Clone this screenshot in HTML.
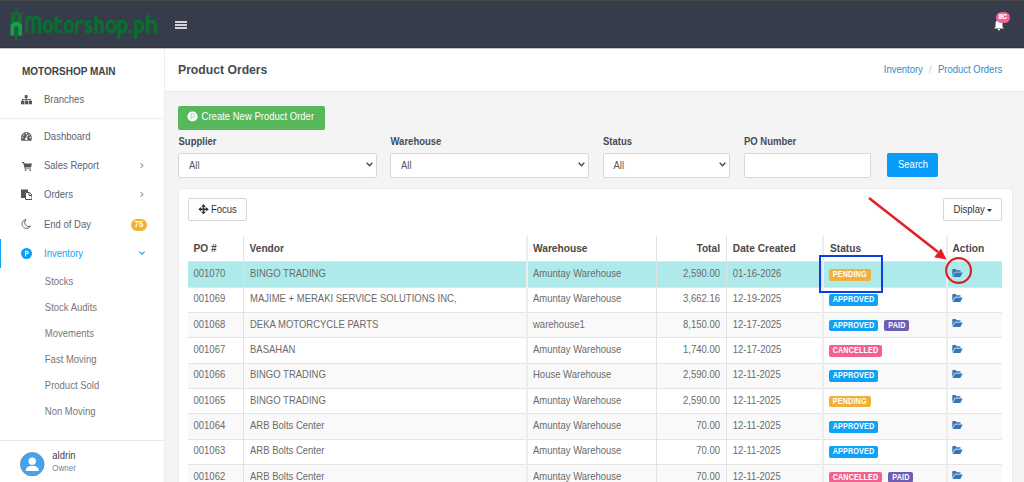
<!DOCTYPE html>
<html><head><meta charset="utf-8">
<style>
html,body{margin:0;padding:0;width:1024px;height:482px;overflow:hidden;background:#f4f4f4;font-family:"Liberation Sans",sans-serif;}
.a{position:absolute;}
.t{position:absolute;white-space:nowrap;line-height:12px;font-size:9.5px;transform:scaleY(1.18);transform-origin:0 9.3px;}
.nt{transform:none;}
#hdr{left:0;top:0;width:1024px;height:48px;background:#363c4a;}
#hdrtop{left:0;top:0;width:1024px;height:1px;background:#474747;}
#hdrbot{left:0;top:47px;width:1024px;height:1px;background:#30363f;}
#side{left:0;top:48px;width:164px;height:434px;background:#fff;}
#sideb{left:164px;top:48px;width:1px;height:434px;background:#eeeeee;}
.si{color:#5a6373;}
.sub{color:#777;}
.ic{position:absolute;fill:#555;}
#chdr{left:165px;top:48px;width:859px;height:43px;background:#fff;border-bottom:1px solid #e8e8e8;}
.lbl{font-weight:bold;color:#444c58;}
.sel{position:absolute;top:153.2px;height:22.8px;background:#fff;border:1px solid #d9d9d9;border-radius:2px;}
.sel span{position:absolute;left:10px;top:5.8px;line-height:12px;font-size:9.5px;color:#555;transform:scaleY(1.18);transform-origin:0 9.3px;}
.sel svg{position:absolute;right:3px;top:8px;}
#box{left:177.8px;top:188.2px;width:835px;height:300px;box-sizing:border-box;background:#fff;border-radius:3px;border:1px solid #ebebeb;}
.btn{position:absolute;background:#fff;border:1px solid #d6d6d6;border-radius:2px;box-sizing:border-box;}
.th{font-weight:bold;font-size:10.2px;color:#4a4a4a;transform:none;}
.row{position:absolute;left:188px;width:814px;height:25.33px;box-sizing:border-box;border-top:1px solid #e4e4e4;}
.vl{position:absolute;width:1px;background:#e2e2e2;top:235.6px;height:250px;}
.td{color:#6b6b6b;}
.bd{position:absolute;height:11.6px;border-radius:2px;color:#fff;font-weight:bold;font-size:7.2px;line-height:11.6px;text-align:center;}
.bd span{display:inline-block;transform:scaleY(1.15);letter-spacing:0.15px;}
.ap{background:#0da2f6;}
.pe{background:#efb03c;}
.ca{background:#f2618f;}
.pa{background:#6f5db4;}
</style></head>
<body>
<div class="a" id="hdr"></div>
<div class="a" id="hdrtop"></div>
<div class="a" id="hdrbot"></div>
<div class="a" style="left:0;top:48px;width:1024px;height:1px;background:rgba(40,46,58,0.28);z-index:5"></div>
<!-- logo -->
<svg class="a" style="left:0;top:0" width="170" height="48" viewBox="0 0 170 48">
  <circle cx="16.2" cy="10.9" r="1.5" fill="none" stroke="#0c7234" stroke-width="1.1"/>
  <path d="M8.3 13.4 Q12 12.6 15 12.4 L17.4 12.4 Q20.4 12.6 24.1 13.4 Q20.4 14.3 17.4 14.5 L15 14.5 Q12 14.3 8.3 13.4 Z" fill="#0c7234"/>
  <path d="M10.9 23 L10.9 17 Q10.9 14.6 13.2 14.5 L15.4 14.5 L15.4 23 Z" fill="#0c7234"/>
  <path d="M21.9 23 L21.9 17 Q21.9 14.6 19.6 14.5 L17.1 14.5 L17.1 23 Z" fill="#0c7234"/>
  <path d="M10.5 34.5 L10.5 25.2 Q10.5 24.3 11.3 23.8 L15.4 21.7 Q16.2 21.3 17 21.7 L21.2 23.8 Q22 24.3 22 25.2 L22 34.5 Q22 35.8 20.7 35.8 L18.3 35.8 L18.3 27.4 L16.2 26.1 L14.2 27.4 L14.2 35.8 L11.8 35.8 Q10.5 35.8 10.5 34.5 Z" fill="#13a249"/>
  <rect x="15" y="26.6" width="2.5" height="13.4" rx="1.1" fill="#0c7234"/>
  <g fill="none" stroke="#0a6d31" stroke-width="3.35">
    <path d="M26.65 33.2 V21.5 A3.225 4.15 0 0 1 33.1 21.5 V33.2 M33.1 21.5 A3.225 4.15 0 0 1 39.55 21.5 V33.2"/>
    <ellipse cx="47.8" cy="26.55" rx="3.75" ry="5.1"/>
    <path d="M56.05 16.2 V29 Q56.05 31.65 58.8 31.65 H61.8 M54.5 21.45 H61.5"/>
    <ellipse cx="68.85" cy="26.55" rx="3.75" ry="5.1"/>
    <path d="M76.55 33.2 V26 Q76.55 21.45 80.8 21.45 H83"/>
    <path d="M90.9 22.6 Q89.6 21.45 87.9 21.45 Q85.85 21.45 85.85 23.6 Q85.85 25.4 88.3 26.4 Q90.75 27.4 90.75 29.6 Q90.75 31.75 88.3 31.75 Q86.3 31.75 85 30.6"/>
    <path d="M95.9 15 V33.2 M95.9 25.2 Q95.9 21.45 99.05 21.45 Q102.2 21.45 102.2 25.2 V33.2"/>
    <ellipse cx="111.3" cy="26.55" rx="4.15" ry="5.1"/>
    <path d="M118.8 19.9 V38.6"/>
    <ellipse cx="122.5" cy="26.55" rx="3.65" ry="5.1"/>
    <path d="M135.7 19.9 V38.6"/>
    <ellipse cx="139.1" cy="26.55" rx="3.45" ry="5.1"/>
    <path d="M147.6 15 V33.2 M147.6 25.2 Q147.6 21.45 151.5 21.45 Q155.4 21.45 155.4 25.2 V33.2"/>
  </g>
  <circle cx="130.4" cy="31.4" r="1.8" fill="#0a6d31"/>
</svg>
<!-- hamburger -->
<div class="a" style="left:175.4px;top:21px;width:11.6px;height:2px;background:#d3d4d9"></div>
<div class="a" style="left:175.4px;top:24px;width:11.6px;height:2px;background:#d3d4d9"></div>
<div class="a" style="left:175.4px;top:27px;width:11.6px;height:2px;background:#d3d4d9"></div>
<!-- bell -->
<svg class="a" style="left:993px;top:19px" width="12" height="12" viewBox="0 0 12 12">
  <path d="M6 1 Q2.5 1 2.5 5 L2.5 8 L1 9.5 L11 9.5 L9.5 8 L9.5 5 Q9.5 1 6 1 Z" fill="#fff"/>
  <rect x="5" y="10" width="2" height="1.3" fill="#fff"/>
</svg>
<div class="a" style="left:995.7px;top:12.2px;width:14px;height:11px;border-radius:6px;background:#ef6494;color:#fff;font-size:6.3px;font-weight:bold;line-height:10px;text-align:center;-webkit-text-stroke:0.2px #fff">8C</div>

<!-- sidebar -->
<div class="a" id="side"></div>
<div class="a" id="sideb"></div>
<div class="t nt" style="left:22px;top:65.8px;font-size:10px;font-weight:bold;color:#3d434c">MOTORSHOP MAIN</div>
<svg class="ic" style="left:20px;top:94px" width="13" height="12" viewBox="0 0 13 12"><rect x="4.7" y="1.1" width="2.9" height="2.9"/><rect x="5.65" y="3.8" width="1" height="1.4"/><rect x="2.2" y="5" width="8.4" height="0.9"/><rect x="2.2" y="5" width="0.9" height="1.9"/><rect x="5.65" y="5" width="0.9" height="1.9"/><rect x="9.7" y="5" width="0.9" height="1.9"/><rect x="1" y="6.8" width="3.3" height="3.5"/><rect x="4.85" y="6.8" width="3.3" height="3.5"/><rect x="8.7" y="6.8" width="3.3" height="3.5"/></svg>
<div class="t si" style="left:44px;top:94px">Branches</div>
<div class="a" style="left:0;top:117.5px;width:164px;height:1px;background:#eeeeee"></div>

<svg class="a" style="left:21.2px;top:132px" width="11" height="9" viewBox="0 0 11 9"><path d="M0.4 8.8 Q0 7.4 0 5.5 A5.4 5.4 0 0 1 10.8 5.5 Q10.8 7.4 10.4 8.8 Z" fill="#5b5f65"/><g fill="#fff"><circle cx="5.3" cy="1.6" r="0.8"/><circle cx="1.6" cy="5.5" r="0.8"/><circle cx="9.2" cy="5.5" r="0.8"/><circle cx="2.7" cy="2.9" r="0.55"/><circle cx="8" cy="2.9" r="0.55"/><circle cx="5.3" cy="6.9" r="1.2"/></g><path d="M5.3 6.6 L6.7 2.6" stroke="#fff" stroke-width="0.9"/></svg>
<div class="t si" style="left:44px;top:130.6px">Dashboard</div>

<svg class="ic" style="left:21.7px;top:162px" width="10" height="9" viewBox="0 0 10 9"><path d="M0 0 L2 0 L2.6 1.5 L10 1.5 L9 5.5 L3.2 5.5 L3.5 6.5 L9 6.5 L9 7.3 L2.8 7.3 L1.3 1 L0 1 Z"/><circle cx="3.5" cy="8.2" r="0.8"/><circle cx="8.2" cy="8.2" r="0.8"/></svg>
<div class="t si" style="left:44px;top:160.4px">Sales Report</div>
<svg class="a" style="left:139.5px;top:162.7px" width="4" height="5" viewBox="0 0 4 5"><path d="M0.5 0.3 L3.2 2.5 L0.5 4.7" stroke="#6e7580" stroke-width="1" fill="none"/></svg>

<svg class="ic" style="left:21px;top:189.3px" width="11" height="11" viewBox="0 0 11 11"><path d="M0 0.5 L7 0.5 L7 3 L4 3 L4 9 L0 9 Z"/><path d="M4.5 3.5 L8.5 3.5 L11 6 L11 10.5 L4.5 10.5 Z" fill="none" stroke="#555" stroke-width="1"/><path d="M8 3.5 L8 6.5 L11 6.5" fill="none" stroke="#555" stroke-width="1"/></svg>
<div class="t si" style="left:44px;top:189.4px">Orders</div>
<svg class="a" style="left:139.5px;top:192.3px" width="4" height="5" viewBox="0 0 4 5"><path d="M0.5 0.3 L3.2 2.5 L0.5 4.7" stroke="#6e7580" stroke-width="1" fill="none"/></svg>

<svg class="ic" style="left:21px;top:218.8px" width="10" height="10" viewBox="0 0 10 10"><path d="M5 0.5 A4.5 4.5 0 1 0 9.6 7 A4 4 0 0 1 5 0.5 Z" fill="none" stroke="#666" stroke-width="1"/></svg>
<div class="t si" style="left:44px;top:219.1px">End of Day</div>
<div class="a" style="left:130.5px;top:219px;width:16.8px;height:11.9px;border-radius:6px;background:#f0b033;color:#fff;font-size:8px;font-weight:bold;line-height:11.9px;text-align:center"><span style="display:inline-block;transform:scaleY(1.1)">75</span></div>

<div class="a" style="left:0;top:238.8px;width:1.3px;height:29px;background:#0ea5f2"></div>
<svg class="a" style="left:21px;top:247.6px" width="11" height="11" viewBox="0 0 11 11"><circle cx="5.5" cy="5.5" r="5.5" fill="#0a9ff3"/><path d="M4 2.8 L6.2 2.8 Q7.8 2.8 7.8 4.5 Q7.8 6.2 6.2 6.2 L5.1 6.2 L5.1 8.3 L4 8.3 Z M5.1 3.8 L5.1 5.2 L6.1 5.2 Q6.7 5.2 6.7 4.5 Q6.7 3.8 6.1 3.8 Z" fill="#fff"/></svg>
<div class="t" style="left:44px;top:247.9px;color:#0ea5f2">Inventory</div>
<svg class="a" style="left:138.7px;top:250.5px" width="6" height="4" viewBox="0 0 6 4"><path d="M0.4 0.6 L3 3.2 L5.6 0.6" stroke="#0ea5f2" stroke-width="1.1" fill="none"/></svg>

<div class="t sub" style="left:44.8px;top:275.6px">Stocks</div>
<div class="t sub" style="left:44.8px;top:301.6px">Stock Audits</div>
<div class="t sub" style="left:44.8px;top:327.7px">Movements</div>
<div class="t sub" style="left:44.8px;top:353.7px">Fast Moving</div>
<div class="t sub" style="left:44.8px;top:379.8px">Product Sold</div>
<div class="t sub" style="left:44.8px;top:405.8px">Non Moving</div>

<div class="a" style="left:0;top:440px;width:164px;height:1px;background:#e8e8e8"></div>
<svg class="a" style="left:20.1px;top:451.7px" width="24.5" height="24.5" viewBox="0 0 24 24"><circle cx="12" cy="12" r="11.6" fill="#44a3ee" stroke="#6b7b88" stroke-width="0.6"/><circle cx="12" cy="9" r="3.6" fill="#fff"/><path d="M5.5 18.5 Q6 13.5 12 13.5 Q18 13.5 18.5 18.5 Z" fill="#fff"/></svg>
<div class="t" style="left:52.3px;top:449.7px;color:#444">aldrin</div>
<div class="t" style="left:52.3px;top:462.8px;font-size:8px;color:#7d838c;transform:scaleY(1.1);transform-origin:0 8.8px">Owner</div>

<!-- content header -->
<div class="a" id="chdr"></div>
<div class="t" style="left:178px;top:63.9px;font-size:12.2px;font-weight:bold;color:#454a52;transform:scaleY(1.06);transform-origin:0 10.16px">Product Orders</div>
<div class="t" style="right:21.7px;top:63.9px;color:#3a86c4"><span>Inventory</span><span style="color:#ccc;padding:0 6.2px">/</span><span>Product Orders</span></div>

<!-- create button -->
<div class="a" style="left:178px;top:106.3px;width:146.5px;height:23.6px;background:#56b85a;border-radius:2px"></div>
<svg class="a" style="left:187.4px;top:111.2px" width="11" height="11" viewBox="0 0 11 11"><circle cx="5.5" cy="5.5" r="5.1" fill="#fff"/><path d="M4.1 8.4 L4.1 3 L6.2 3 Q7.6 3 7.6 4.6 Q7.6 6.2 6.2 6.2 L4.3 6.2" fill="none" stroke="#8fd48f" stroke-width="0.9"/></svg>
<div class="t" style="left:201.6px;top:111px;color:#fff">Create New Product Order</div>

<!-- filters -->
<div class="t lbl" style="left:178.5px;top:135.9px">Supplier</div>
<div class="t lbl" style="left:390.5px;top:135.9px">Warehouse</div>
<div class="t lbl" style="left:603px;top:135.9px">Status</div>
<div class="t lbl" style="left:744px;top:135.9px">PO Number</div>

<div class="sel" style="left:178px;width:196.5px"><span>All</span><svg width="7" height="5" viewBox="0 0 7 5"><path d="M0.7 0.8 L3.5 3.8 L6.3 0.8" stroke="#444" stroke-width="1.3" fill="none"/></svg></div>
<div class="sel" style="left:390px;width:196.5px"><span>All</span><svg width="7" height="5" viewBox="0 0 7 5"><path d="M0.7 0.8 L3.5 3.8 L6.3 0.8" stroke="#444" stroke-width="1.3" fill="none"/></svg></div>
<div class="sel" style="left:602.5px;width:125.5px"><span>All</span><svg width="7" height="5" viewBox="0 0 7 5"><path d="M0.7 0.8 L3.5 3.8 L6.3 0.8" stroke="#444" stroke-width="1.3" fill="none"/></svg></div>
<div class="sel" style="left:744px;width:125px"></div>
<div class="a" style="left:887.2px;top:153.2px;width:50.8px;height:23.8px;background:#069cf7;border-radius:2px"></div>
<div class="t" style="left:898px;top:158.6px;color:#fff">Search</div>

<!-- box -->
<div class="a" id="box"></div>
<div class="btn" style="left:188.4px;top:198.3px;width:58.2px;height:23.2px"></div>
<svg class="a" style="left:197.9px;top:203.6px" width="11" height="10.5" viewBox="0 0 11 11"><g fill="#333"><rect x="4.7" y="2" width="1.6" height="7"/><rect x="2" y="4.7" width="7" height="1.6"/><path d="M5.5 0 L3.1 3 L7.9 3 Z M5.5 11 L3.1 8 L7.9 8 Z M0 5.5 L3 3.1 L3 7.9 Z M11 5.5 L8 3.1 L8 7.9 Z"/></g></svg>
<div class="t" style="left:211px;top:204.3px;color:#333">Focus</div>
<div class="btn" style="left:943px;top:198.4px;width:58.8px;height:23.1px"></div>
<div class="t" style="left:953.6px;top:204.2px;color:#333">Display</div>
<svg class="a" style="left:987px;top:208.5px" width="5" height="3" viewBox="0 0 5 3"><path d="M0 0 L5 0 L2.5 3 Z" fill="#333"/></svg>

<!-- table header -->
<div class="t th" style="left:193.5px;top:243px">PO #</div>
<div class="t th" style="left:249.5px;top:243px">Vendor</div>
<div class="t th" style="left:533px;top:243px">Warehouse</div>
<div class="t th" style="right:304px;top:243px">Total</div>
<div class="t th" style="left:732.8px;top:243px">Date Created</div>
<div class="t th" style="left:830px;top:243px">Status</div>
<div class="t th" style="left:952.5px;top:243px">Action</div>

<div id="rows"></div>
<div class="row" style="top:261.33px;background:#aeeaea"></div>
<div class="row" style="top:286.66px;background:#fff"></div>
<div class="row" style="top:311.99px;background:#f9f9f9"></div>
<div class="row" style="top:337.32px;background:#fff"></div>
<div class="row" style="top:362.65px;background:#f9f9f9"></div>
<div class="row" style="top:387.98px;background:#fff"></div>
<div class="row" style="top:413.31px;background:#f9f9f9"></div>
<div class="row" style="top:438.64px;background:#fff"></div>
<div class="row" style="top:463.97px;background:#f9f9f9"></div>
<div class="vl" style="left:243px;width:1px;background:#e2e2e2"></div>
<div class="vl" style="left:526px;width:2px;background:#ededed"></div>
<div class="vl" style="left:656px;width:1px;background:#e2e2e2"></div>
<div class="vl" style="left:726px;width:1px;background:#e2e2e2"></div>
<div class="vl" style="left:822px;width:2px;background:#ededed"></div>
<div class="vl" style="left:946px;width:2px;background:#ededed"></div>
<div class="t td" style="left:193.5px;top:268.03px">001070</div>
<div class="t td" style="left:250px;top:268.03px">BINGO TRADING</div>
<div class="t td" style="left:533px;top:268.03px">Amuntay Warehouse</div>
<div class="t td" style="right:304px;top:268.03px">2,590.00</div>
<div class="t td" style="left:732.8px;top:268.03px">01-16-2026</div>
<div class="bd pe" style="left:829px;top:268.93px;width:41.5px"><span>PENDING</span></div>
<svg class="a" style="left:952.4px;top:268.73px" width="11" height="8" viewBox="0 0 11 8"><path d="M0.3 0.7 Q0.3 0 1 0 L3.7 0 L4.6 1.2 L8 1.2 Q8.6 1.2 8.6 1.8 L8.6 2.8 L2.9 2.8 L0.3 7.2 Z" fill="#3576b9"/><path d="M3.2 3.4 L10.6 3.4 L8.4 7.9 L0.6 7.9 Z" fill="#3576b9"/></svg>
<div class="t td" style="left:193.5px;top:293.36px">001069</div>
<div class="t td" style="left:250px;top:293.36px">MAJIME + MERAKI SERVICE SOLUTIONS INC,</div>
<div class="t td" style="left:533px;top:293.36px">Amuntay Warehouse</div>
<div class="t td" style="right:304px;top:293.36px">3,662.16</div>
<div class="t td" style="left:732.8px;top:293.36px">12-19-2025</div>
<div class="bd ap" style="left:829px;top:294.26px;width:49px"><span>APPROVED</span></div>
<svg class="a" style="left:952.4px;top:294.06px" width="11" height="8" viewBox="0 0 11 8"><path d="M0.3 0.7 Q0.3 0 1 0 L3.7 0 L4.6 1.2 L8 1.2 Q8.6 1.2 8.6 1.8 L8.6 2.8 L2.9 2.8 L0.3 7.2 Z" fill="#3576b9"/><path d="M3.2 3.4 L10.6 3.4 L8.4 7.9 L0.6 7.9 Z" fill="#3576b9"/></svg>
<div class="t td" style="left:193.5px;top:318.69px">001068</div>
<div class="t td" style="left:250px;top:318.69px">DEKA MOTORCYCLE PARTS</div>
<div class="t td" style="left:533px;top:318.69px">warehouse1</div>
<div class="t td" style="right:304px;top:318.69px">8,150.00</div>
<div class="t td" style="left:732.8px;top:318.69px">12-17-2025</div>
<div class="bd ap" style="left:829px;top:319.59px;width:49px"><span>APPROVED</span></div>
<div class="bd pa" style="left:884.4px;top:319.59px;width:25px"><span>PAID</span></div>
<svg class="a" style="left:952.4px;top:319.39px" width="11" height="8" viewBox="0 0 11 8"><path d="M0.3 0.7 Q0.3 0 1 0 L3.7 0 L4.6 1.2 L8 1.2 Q8.6 1.2 8.6 1.8 L8.6 2.8 L2.9 2.8 L0.3 7.2 Z" fill="#3576b9"/><path d="M3.2 3.4 L10.6 3.4 L8.4 7.9 L0.6 7.9 Z" fill="#3576b9"/></svg>
<div class="t td" style="left:193.5px;top:344.02px">001067</div>
<div class="t td" style="left:250px;top:344.02px">BASAHAN</div>
<div class="t td" style="left:533px;top:344.02px">Amuntay Warehouse</div>
<div class="t td" style="right:304px;top:344.02px">1,740.00</div>
<div class="t td" style="left:732.8px;top:344.02px">12-17-2025</div>
<div class="bd ca" style="left:829px;top:344.92px;width:53px"><span>CANCELLED</span></div>
<svg class="a" style="left:952.4px;top:344.72px" width="11" height="8" viewBox="0 0 11 8"><path d="M0.3 0.7 Q0.3 0 1 0 L3.7 0 L4.6 1.2 L8 1.2 Q8.6 1.2 8.6 1.8 L8.6 2.8 L2.9 2.8 L0.3 7.2 Z" fill="#3576b9"/><path d="M3.2 3.4 L10.6 3.4 L8.4 7.9 L0.6 7.9 Z" fill="#3576b9"/></svg>
<div class="t td" style="left:193.5px;top:369.35px">001066</div>
<div class="t td" style="left:250px;top:369.35px">BINGO TRADING</div>
<div class="t td" style="left:533px;top:369.35px">House Warehouse</div>
<div class="t td" style="right:304px;top:369.35px">2,590.00</div>
<div class="t td" style="left:732.8px;top:369.35px">12-11-2025</div>
<div class="bd ap" style="left:829px;top:370.25px;width:49px"><span>APPROVED</span></div>
<svg class="a" style="left:952.4px;top:370.05px" width="11" height="8" viewBox="0 0 11 8"><path d="M0.3 0.7 Q0.3 0 1 0 L3.7 0 L4.6 1.2 L8 1.2 Q8.6 1.2 8.6 1.8 L8.6 2.8 L2.9 2.8 L0.3 7.2 Z" fill="#3576b9"/><path d="M3.2 3.4 L10.6 3.4 L8.4 7.9 L0.6 7.9 Z" fill="#3576b9"/></svg>
<div class="t td" style="left:193.5px;top:394.68px">001065</div>
<div class="t td" style="left:250px;top:394.68px">BINGO TRADING</div>
<div class="t td" style="left:533px;top:394.68px">Amuntay Warehouse</div>
<div class="t td" style="right:304px;top:394.68px">2,590.00</div>
<div class="t td" style="left:732.8px;top:394.68px">12-11-2025</div>
<div class="bd pe" style="left:829px;top:395.58px;width:41.5px"><span>PENDING</span></div>
<svg class="a" style="left:952.4px;top:395.38px" width="11" height="8" viewBox="0 0 11 8"><path d="M0.3 0.7 Q0.3 0 1 0 L3.7 0 L4.6 1.2 L8 1.2 Q8.6 1.2 8.6 1.8 L8.6 2.8 L2.9 2.8 L0.3 7.2 Z" fill="#3576b9"/><path d="M3.2 3.4 L10.6 3.4 L8.4 7.9 L0.6 7.9 Z" fill="#3576b9"/></svg>
<div class="t td" style="left:193.5px;top:420.01px">001064</div>
<div class="t td" style="left:250px;top:420.01px">ARB Bolts Center</div>
<div class="t td" style="left:533px;top:420.01px">Amuntay Warehouse</div>
<div class="t td" style="right:304px;top:420.01px">70.00</div>
<div class="t td" style="left:732.8px;top:420.01px">12-11-2025</div>
<div class="bd ap" style="left:829px;top:420.91px;width:49px"><span>APPROVED</span></div>
<svg class="a" style="left:952.4px;top:420.71px" width="11" height="8" viewBox="0 0 11 8"><path d="M0.3 0.7 Q0.3 0 1 0 L3.7 0 L4.6 1.2 L8 1.2 Q8.6 1.2 8.6 1.8 L8.6 2.8 L2.9 2.8 L0.3 7.2 Z" fill="#3576b9"/><path d="M3.2 3.4 L10.6 3.4 L8.4 7.9 L0.6 7.9 Z" fill="#3576b9"/></svg>
<div class="t td" style="left:193.5px;top:445.34px">001063</div>
<div class="t td" style="left:250px;top:445.34px">ARB Bolts Center</div>
<div class="t td" style="left:533px;top:445.34px">Amuntay Warehouse</div>
<div class="t td" style="right:304px;top:445.34px">70.00</div>
<div class="t td" style="left:732.8px;top:445.34px">12-11-2025</div>
<div class="bd ap" style="left:829px;top:446.24px;width:49px"><span>APPROVED</span></div>
<svg class="a" style="left:952.4px;top:446.04px" width="11" height="8" viewBox="0 0 11 8"><path d="M0.3 0.7 Q0.3 0 1 0 L3.7 0 L4.6 1.2 L8 1.2 Q8.6 1.2 8.6 1.8 L8.6 2.8 L2.9 2.8 L0.3 7.2 Z" fill="#3576b9"/><path d="M3.2 3.4 L10.6 3.4 L8.4 7.9 L0.6 7.9 Z" fill="#3576b9"/></svg>
<div class="t td" style="left:193.5px;top:470.67px">001062</div>
<div class="t td" style="left:250px;top:470.67px">ARB Bolts Center</div>
<div class="t td" style="left:533px;top:470.67px">Amuntay Warehouse</div>
<div class="t td" style="right:304px;top:470.67px">70.00</div>
<div class="t td" style="left:732.8px;top:470.67px">12-11-2025</div>
<div class="bd ca" style="left:829px;top:471.57px;width:53px"><span>CANCELLED</span></div>
<div class="bd pa" style="left:888.4px;top:471.57px;width:25px"><span>PAID</span></div>
<svg class="a" style="left:952.4px;top:471.37px" width="11" height="8" viewBox="0 0 11 8"><path d="M0.3 0.7 Q0.3 0 1 0 L3.7 0 L4.6 1.2 L8 1.2 Q8.6 1.2 8.6 1.8 L8.6 2.8 L2.9 2.8 L0.3 7.2 Z" fill="#3576b9"/><path d="M3.2 3.4 L10.6 3.4 L8.4 7.9 L0.6 7.9 Z" fill="#3576b9"/></svg>

<!-- annotations -->
<div class="a" style="left:818.9px;top:255.3px;width:63.8px;height:37.3px;box-sizing:border-box;border:2.2px solid #0f3fe4"></div>
<svg class="a" style="left:0;top:0" width="1024" height="482" viewBox="0 0 1024 482">
  <circle cx="958.6" cy="270.5" r="12.4" fill="none" stroke="#dc1f26" stroke-width="2.2"/>
  <line x1="869" y1="198" x2="938" y2="252" stroke="#e21d24" stroke-width="2.5"/>
  <path d="M946.5 259.4 L934.2 257.2 L941 248.5 Z" fill="#e21d24"/>
</svg>
</body></html>
